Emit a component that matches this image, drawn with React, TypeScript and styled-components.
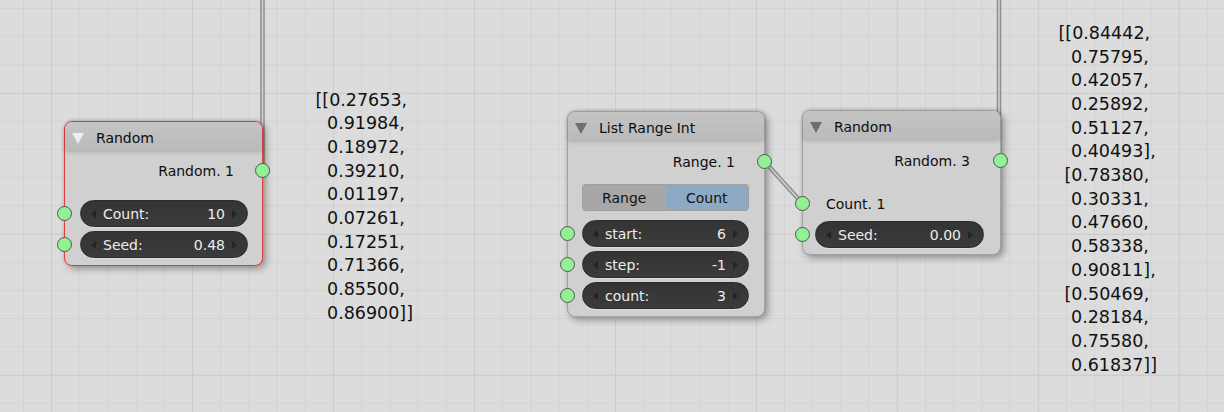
import React from "react";
import styled, { createGlobalStyle } from "styled-components";

const Global = createGlobalStyle`
  html, body { margin: 0; padding: 0; background: #dcdcdc; }
  * { box-sizing: border-box; }
`;

const Canvas = styled.div`
  position: relative;
  width: 1224px;
  height: 412px;
  overflow: hidden;
  font-family: "DejaVu Sans", "Liberation Sans", sans-serif;
  background-color: #dcdcdc;
  background-image:
    linear-gradient(to right, #cdcdcd 1px, transparent 1px),
    linear-gradient(to bottom, #cdcdcd 1px, transparent 1px),
    linear-gradient(to right, #d3d3d3 1px, transparent 1px),
    linear-gradient(to bottom, #d3d3d3 1px, transparent 1px);
  background-size: 141px 141px, 141px 141px, 28.2px 28.2px, 28.2px 28.2px;
  background-position: 51px 93px, 51px 93px, 23px 8px, 23px 8px;
`;

const Wires = styled.svg`
  position: absolute;
  left: 0;
  top: 0;
  width: 1224px;
  height: 412px;
`;

const Node = styled.div<{ $x: number; $y: number; $w: number; $selected?: boolean }>`
  position: absolute;
  left: ${(p) => p.$x}px;
  top: ${(p) => p.$y}px;
  width: ${(p) => p.$w}px;
  display: flex;
  flex-direction: column;
  background: #d0d0d0;
  border: 1px solid ${(p) => (p.$selected ? "#e23c3c" : "#a2a2a2")};
  border-radius: 8px;
  box-shadow: 3px 3px 7px rgba(0, 0, 0, 0.34), 0 -1px 3px rgba(0, 0, 0, 0.12);
  color: #0e0e0e;
  font-size: 14px;
`;

const Header = styled.div`
  position: relative;
  height: 28px;
  display: flex;
  align-items: center;
  padding: 3px 0 0 7px;
  gap: 12px;
  background: linear-gradient(#c4c4c4, #bababa);
  border-radius: 7px 7px 0 0;
  box-shadow: 0 2px 4px rgba(0, 0, 0, 0.16);
`;

const Collapse = styled.span<{ $light?: boolean }>`
  width: 0;
  height: 0;
  margin-top: 2px;
  border-left: 6.5px solid transparent;
  border-right: 6.5px solid transparent;
  border-top: 11px solid ${(p) => (p.$light ? "#ededed" : "#6f6f6f")};
`;

const Title = styled.span`
  color: #0e0e0e;
  white-space: nowrap;
`;

const SocketRow = styled.div<{ $mt: number; $out?: boolean; $pad?: number }>`
  position: relative;
  height: 22px;
  margin-top: ${(p) => p.$mt}px;
  display: flex;
  align-items: center;
  justify-content: ${(p) => (p.$out ? "flex-end" : "flex-start")};
  padding: ${(p) => (p.$out ? `0 ${p.$pad ?? 29}px 0 0` : `0 0 0 ${p.$pad ?? 24}px`)};
  white-space: nowrap;
`;

const Socket = styled.span<{ $side: "left" | "right"; $dy?: number }>`
  position: absolute;
  top: 50%;
  ${(p) => p.$side}: -8px;
  width: 15px;
  height: 15px;
  margin-top: ${(p) => -7.5 + (p.$dy ?? 0)}px;
  border-radius: 50%;
  background: #92f192;
  border: 1px solid #545454;
`;

const InsetRow = styled.div<{ $mt: number; $l: number; $r: number }>`
  position: relative;
  margin-top: ${(p) => p.$mt}px;
  padding: 0 ${(p) => p.$r}px 0 ${(p) => p.$l}px;
`;

const Pill = styled.div`
  height: 27px;
  display: flex;
  align-items: center;
  padding: 0 10px;
  border-radius: 13.5px;
  background: linear-gradient(#343434, #3b3b3b);
  border: 1px solid #2b2b2b;
  box-shadow: 0 1px 0 rgba(255, 255, 255, 0.3);
  color: #ededed;
`;

const Arrow = styled.span<{ $dir: "left" | "right" }>`
  width: 0;
  height: 0;
  border-top: 4px solid transparent;
  border-bottom: 4px solid transparent;
  ${(p) =>
    p.$dir === "left"
      ? "border-right: 5px solid #232323;"
      : "border-left: 5px solid #232323;"}
`;

const FieldLabel = styled.span`
  margin-left: 7px;
  flex: 1;
`;

const FieldValue = styled.span`
  margin-right: 7px;
`;

const Segmented = styled.div`
  height: 27px;
  display: grid;
  grid-template-columns: 1fr 1fr;
  border-radius: 3px;
  overflow: hidden;
  border: 1px solid #a0a0a0;
`;

const SegButton = styled.div<{ $active?: boolean }>`
  display: flex;
  align-items: center;
  justify-content: center;
  background: ${(p) => (p.$active ? "#8da9c3" : "#a7a7a7")};
  color: #141414;
`;

const Bottom = styled.div<{ $h: number }>`
  height: ${(p) => p.$h}px;
`;

const Printout = styled.div<{ $x: number; $y: number }>`
  position: absolute;
  left: ${(p) => p.$x}px;
  top: ${(p) => p.$y}px;
  font-family: "DejaVu Sans", sans-serif;
  font-size: 17.5px;
  line-height: 23.7px;
  color: #111111;
  white-space: pre;
`;

const PrintLine = styled.div<{ $indent: number }>`
  padding-left: ${(p) => p.$indent}px;
`;

function Field({ label, value }: { label: string; value: string }) {
  return (
    <Pill>
      <Arrow $dir="left" />
      <FieldLabel>{label}</FieldLabel>
      <FieldValue>{value}</FieldValue>
      <Arrow $dir="right" />
    </Pill>
  );
}

const list1: [string, number][] = [
  ["[[0.27653,", 0],
  ["0.91984,", 11.5],
  ["0.18972,", 11.5],
  ["0.39210,", 11.5],
  ["0.01197,", 11.5],
  ["0.07261,", 11.5],
  ["0.17251,", 11.5],
  ["0.71366,", 11.5],
  ["0.85500,", 11.5],
  ["0.86900]]", 11.5],
];

const list2: [string, number][] = [
  ["[[0.84442,", 0],
  ["0.75795,", 12.5],
  ["0.42057,", 12.5],
  ["0.25892,", 12.5],
  ["0.51127,", 12.5],
  ["0.40493],", 12.5],
  ["[0.78380,", 6],
  ["0.30331,", 12.5],
  ["0.47660,", 12.5],
  ["0.58338,", 12.5],
  ["0.90811],", 12.5],
  ["[0.50469,", 6],
  ["0.28184,", 12.5],
  ["0.75580,", 12.5],
  ["0.61837]]", 12.5],
];

export default function App() {
  return (
    <>
      <Global />
      <Canvas>
        <Wires viewBox="0 0 1224 412">
          <g fill="none" strokeLinecap="round">
            <path d="M262.5 -5 L262.5 170" stroke="#8d8d8d" strokeWidth="4.5" />
            <path d="M262.5 -5 L262.5 170" stroke="#d2d2d2" strokeWidth="1.6" />
            <path d="M999 -5 L999 160" stroke="#8d8d8d" strokeWidth="4.5" />
            <path d="M999 -5 L999 160" stroke="#d2d2d2" strokeWidth="1.6" />
            <path d="M765 162 L802 203" stroke="#8d8d8d" strokeWidth="4.5" />
            <path d="M765 162 L802 203" stroke="#d2d2d2" strokeWidth="1.6" />
          </g>
        </Wires>

        <Printout $x={315.5} $y={88.5}>
          {list1.map(([t, i], k) => (
            <PrintLine key={k} $indent={i}>{t}</PrintLine>
          ))}
        </Printout>

        <Printout $x={1058.5} $y={21.8}>
          {list2.map(([t, i], k) => (
            <PrintLine key={k} $indent={i}>{t}</PrintLine>
          ))}
        </Printout>

        {/* Node 1 */}
        <Node $x={64} $y={121} $w={199} $selected>
          <Header>
            <Collapse $light />
            <Title>Random</Title>
          </Header>
          <SocketRow $mt={10} $out $pad={28}>
            Random. 1
            <Socket $side="right" $dy={-1} />
          </SocketRow>
          <InsetRow $mt={18} $l={15} $r={14}>
            <Field label="Count:" value="10" />
            <Socket $side="left" />
          </InsetRow>
          <InsetRow $mt={4} $l={15} $r={14}>
            <Field label="Seed:" value="0.48" />
            <Socket $side="left" />
          </InsetRow>
          <Bottom $h={7} />
        </Node>

        {/* Node 2 */}
        <Node $x={567} $y={111} $w={198}>
          <Header>
            <Collapse />
            <Title>List Range Int</Title>
          </Header>
          <SocketRow $mt={11} $out $pad={29}>
            Range. 1
            <Socket $side="right" $dy={-1} />
          </SocketRow>
          <InsetRow $mt={11} $l={14} $r={15}>
            <Segmented>
              <SegButton>Range</SegButton>
              <SegButton $active>Count</SegButton>
            </Segmented>
          </InsetRow>
          <InsetRow $mt={9} $l={14} $r={15}>
            <Field label="start:" value="6" />
            <Socket $side="left" />
          </InsetRow>
          <InsetRow $mt={4} $l={14} $r={15}>
            <Field label="step:" value="-1" />
            <Socket $side="left" />
          </InsetRow>
          <InsetRow $mt={4} $l={14} $r={15}>
            <Field label="count:" value="3" />
            <Socket $side="left" />
          </InsetRow>
          <Bottom $h={7} />
        </Node>

        {/* Node 3 */}
        <Node $x={802} $y={110} $w={199}>
          <Header>
            <Collapse />
            <Title>Random</Title>
          </Header>
          <SocketRow $mt={11} $out $pad={30}>
            Random. 3
            <Socket $side="right" $dy={-1} />
          </SocketRow>
          <SocketRow $mt={21} $pad={23}>
            Count. 1
            <Socket $side="left" $dy={-1} />
          </SocketRow>
          <InsetRow $mt={6} $l={12} $r={16}>
            <Field label="Seed:" value="0.00" />
            <Socket $side="left" />
          </InsetRow>
          <Bottom $h={6} />
        </Node>
      </Canvas>
    </>
  );
}
